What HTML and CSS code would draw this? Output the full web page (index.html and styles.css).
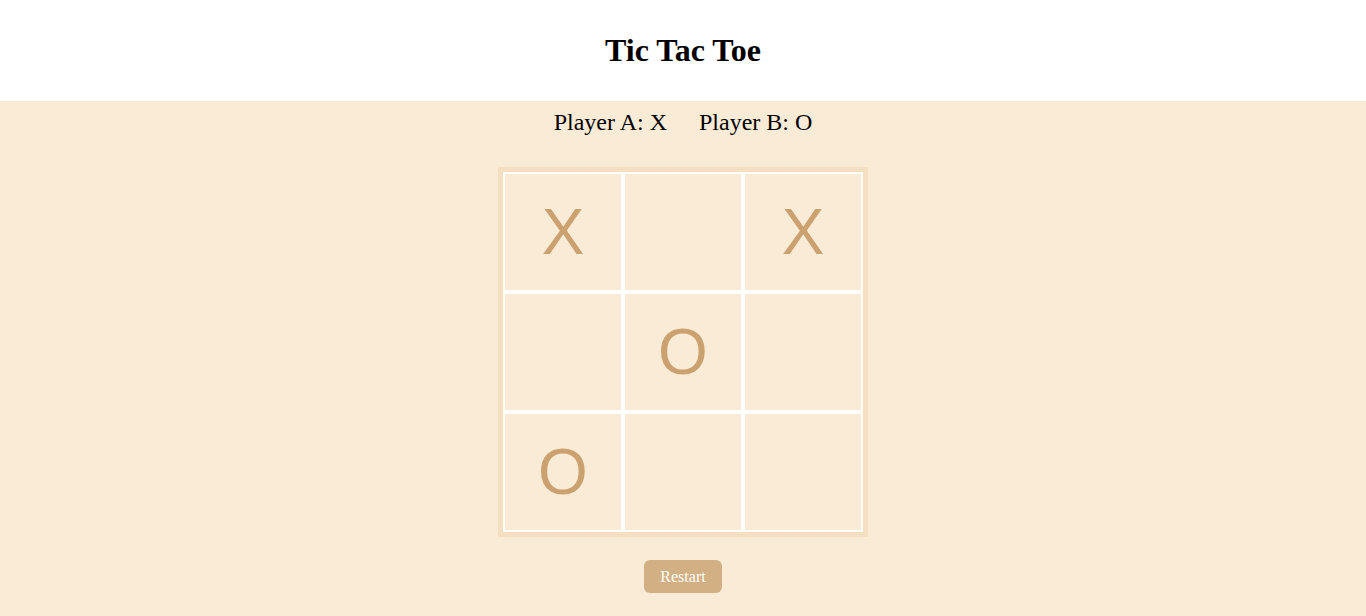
FILE: index.html
```html
<!DOCTYPE html>
<html>
<head>
<meta charset="utf-8">
<title>Tic Tac Toe</title>
<link rel="stylesheet" href="styles.css">
</head>
<body>
<header class="header"><h1 class="title">Tic Tac Toe</h1></header>
<main class="main">
  <div class="players"><span>Player A: X</span><span>Player B: O</span></div>
  <div class="board">
    <div class="cell">X</div><div class="cell"></div><div class="cell">X</div>
    <div class="cell"></div><div class="cell">O</div><div class="cell"></div>
    <div class="cell">O</div><div class="cell"></div><div class="cell"></div>
  </div>
  <button class="restart">Restart</button>
</main>
</body>
</html>
```
FILE: styles.css
```css
html, body { margin: 0; padding: 0; }
body {
  font-family: "Liberation Serif", "Times New Roman", serif;
  background: #faebd7;
  color: #000;
}
.header {
  height: 101px;
  background: #fff;
  display: flex;
  align-items: center;
  justify-content: center;
}
.title {
  margin: 0;
  font-size: 32px;
  font-weight: bold;
  line-height: 37px;
}
.main {
  display: flex;
  flex-direction: column;
  align-items: center;
  height: 515px;
}
.players {
  display: flex;
  gap: 32px;
  font-size: 24px;
  line-height: 28px;
  margin-top: 7px;
  height: 28px;
}
.board {
  margin-top: 31px;
  display: grid;
  grid-template-columns: repeat(3, 120px);
  grid-template-rows: repeat(3, 120px);
  border: 5px solid #f4dfc2;
}
.cell {
  box-sizing: border-box;
  border: 2px solid #fff;
  display: flex;
  align-items: center;
  justify-content: center;
  font-family: "Liberation Sans", Arial, sans-serif;
  font-size: 64px;
  color: #cba26f;
}
.restart {
  margin-top: 23px;
  height: 33px;
  width: 78px;
  padding: 0;
  border: none;
  border-radius: 6px;
  background: #d2b083;
  color: #fff;
  font-family: "Liberation Serif", "Times New Roman", serif;
  font-size: 16px;
}
```
